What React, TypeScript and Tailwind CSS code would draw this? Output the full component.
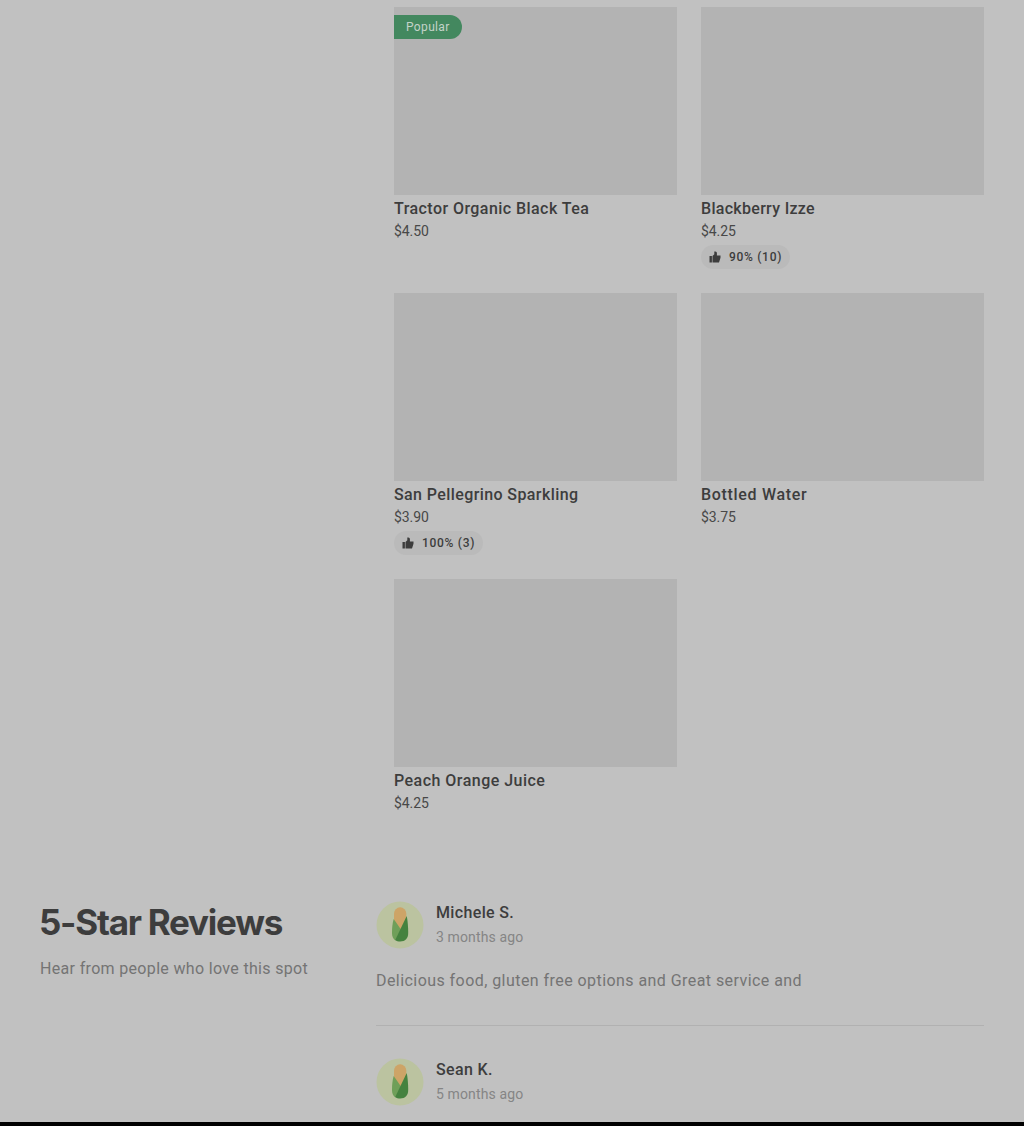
import React from 'react';
import { clsx } from 'clsx';

interface MenuItem {
    name: string;
    price: string;
    rating?: string;
    popular?: boolean;
    tracking: string;
}

interface Review {
    author: string;
    date: string;
    text?: string;
}

const items: MenuItem[] = [
    { name: 'Tractor Organic Black Tea', price: '$4.50', popular: true, tracking: 'tracking-[0.44px]' },
    { name: 'Blackberry Izze', price: '$4.25', rating: '90% (10)', tracking: 'tracking-[0.3px]' },
    { name: 'San Pellegrino Sparkling', price: '$3.90', rating: '100% (3)', tracking: 'tracking-[0.4px]' },
    { name: 'Bottled Water', price: '$3.75', tracking: 'tracking-[0.68px]' },
    { name: 'Peach Orange Juice', price: '$4.25', tracking: 'tracking-[0.47px]' },
];

const reviews: Review[] = [
    {
        author: 'Michele S.',
        date: '3 months ago',
        text: 'Delicious food, gluten free options and Great service and',
    },
    { author: 'Sean K.', date: '5 months ago' },
];

function ThumbUp() {
    return (
        <svg width="12" height="12" viewBox="0 0 12 12" fill="currentColor" className="shrink-0">
            <path d="M0.5 5h2.4v6.5H0.5z" />
            <path d="M3.5 5.1 5.3 3.2V0.6h1.1a1.5 1.5 0 0 1 1.5 1.5v2.3h3.6v2.4l-1.5 4.7H3.5z" />
        </svg>
    );
}

function CornAvatar() {
    return (
        <svg width="48" height="48" viewBox="0 0 48 48" className="shrink-0">
            <circle cx="24" cy="24" r="23.5" fill="#bbc3a0" />
            <path d="M18 26V12.500a6 6 0 0 1 12.300 0V26l-6 8z" fill="#cda467" />
            <path d="M16 32c0-5.500.5-10 1.700-14L25 28.500l-5.500 11c-2.300-1.500-3.500-4-3.500-7.500z" fill="#6f9f59" />
            <path d="M30.700 15c1 5 1.500 10.500 1.500 17 0 5.500-3 8.500-8 8.500-2 0-3.700-.5-5-1.500z" fill="#45823f" />
        </svg>
    );
}

function MenuCard({ item }: { item: MenuItem }) {
    return (
        <div className="h-[262px]">
            <div className="relative h-[188px] w-full bg-[#b3b3b3]">
                {item.popular && (
                    <div className="absolute left-0 top-2 flex h-6 w-[68px] items-center rounded-r-full bg-[#43885f] pl-3 text-xs tracking-[0.35px] text-[#c3d3c9]">
                        Popular
                    </div>
                )}
            </div>
            <div className={clsx('mt-[2px] h-6 whitespace-nowrap text-base font-medium text-[#3d3d3d]', item.tracking)}>
                {item.name}
            </div>
            <div className="h-[23px] text-sm leading-5 tracking-[-0.1px] text-[#484848]">{item.price}</div>
            {item.rating && (
                <div className="mt-[1px] flex h-6 w-[89px] items-center rounded-full bg-[#bababa] pl-2 text-xs font-medium tracking-[0.7px] text-[#3d3d3d]">
                    <ThumbUp />
                    <span className="ml-2 whitespace-nowrap">{item.rating}</span>
                </div>
            )}
        </div>
    );
}

function ReviewRow({ review }: { review: Review }) {
    return (
        <div>
            <div className="flex h-12 gap-3">
                <CornAvatar />
                <div>
                    <div className="text-base font-medium tracking-[0.35px] text-[#3d3d3d]">{review.author}</div>
                    <div className="mt-[1px] text-sm leading-[22px] tracking-[0.13px] text-[#858585]">{review.date}</div>
                </div>
            </div>
            {review.text && (
                <p className="mt-5 h-[57px] whitespace-nowrap border-b border-[#b1b1b1] text-base tracking-[0.44px] text-[#747474]">
                    {review.text}
                </p>
            )}
        </div>
    );
}

export default function App() {
    return (
        <div className="flex h-[1126px] w-[1024px] flex-col overflow-hidden bg-[#c1c1c1] font-['Roboto',sans-serif]">
            <section className="ml-[394px] mt-[7px] grid w-[590px] shrink-0 grid-cols-2 gap-6">
                {items.map((item) => (
                    <MenuCard key={item.name} item={item} />
                ))}
            </section>

            <section className="mt-[60px] flex h-[221px] shrink-0 pl-10">
                <div className="w-[336px]">
                    <h2 className="-ml-[1px] mt-[1px] whitespace-nowrap font-['Inter',sans-serif] text-[35px] font-bold leading-[40px] tracking-[-1.25px] text-[#3d3d3d]">
                        5-Star Reviews
                    </h2>
                    <p className="mt-[15px] whitespace-nowrap text-base tracking-[0.33px] text-[#747474]">
                        Hear from people who love this spot
                    </p>
                </div>
                <div className="flex w-[608px] flex-col gap-8">
                    {reviews.map((review) => (
                        <ReviewRow key={review.author} review={review} />
                    ))}
                </div>
            </section>

            <div className="mt-auto h-1 shrink-0 bg-black" />
        </div>
    );
}
